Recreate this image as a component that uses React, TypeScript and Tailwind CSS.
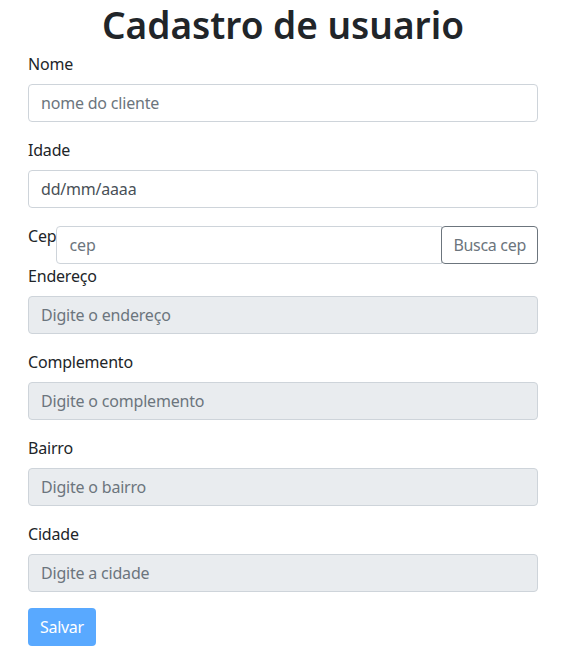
import { ReactNode } from "react";

const font = { fontFamily: '"Segoe UI", "Noto Sans", "Open Sans", sans-serif' };

function Field({ label, placeholder, disabled = false, value }: { label: string; placeholder?: string; disabled?: boolean; value?: string }) {
  return (
    <div className="mb-4">
      <label className="mb-2 block text-base leading-6 tracking-[-0.2px] text-[#212529]">{label}</label>
      <input
        readOnly
        disabled={disabled}
        placeholder={placeholder}
        defaultValue={value}
        className={
          "block h-[38px] w-full rounded border border-[#ced4da] px-3 text-base tracking-[-0.2px] text-[#495057] outline-none placeholder:text-[#6c757d] " +
          (disabled ? "bg-[#e9ecef]" : "bg-white")
        }
        style={font}
      />
    </div>
  );
}

function Row({ children }: { children: ReactNode }) {
  return <div className="flex items-start">{children}</div>;
}

export default function App() {
  return (
    <div className="min-h-screen bg-white" style={font}>
      <div className="ml-[28px] w-[510px]">
        <h1 className="pt-[2px] text-center text-[37px] font-semibold leading-[46px] text-[#212529]">Cadastro de usuario</h1>
        <form className="mt-1">
          <Field label="Nome" placeholder="nome do cliente" />
          <Field label="Idade" value="dd/mm/aaaa" />
          <Row>
            <label className="text-base leading-6 tracking-[-0.2px] text-[#212529]">Cep</label>
            <div className="mt-[2px] flex flex-1">
              <input
                readOnly
                placeholder="cep"
                className="h-[38px] min-w-0 flex-1 rounded-l border border-[#ced4da] bg-white px-3 text-base outline-none placeholder:text-[#6c757d]"
                style={font}
              />
              <button
                type="button"
                className="-ml-px h-[38px] rounded border border-[#6c757d] bg-white px-[11px] text-base tracking-[-0.3px] text-[#6c757d]"
                style={font}
              >
                Busca cep
              </button>
            </div>
          </Row>
          <Field label="Endereço" placeholder="Digite o endereço" disabled />
          <Field label="Complemento" placeholder="Digite o complemento" disabled />
          <Field label="Bairro" placeholder="Digite o bairro" disabled />
          <Field label="Cidade" placeholder="Digite a cidade" disabled />
          <button type="button" className="h-[38px] rounded bg-[#59a9ff] px-3 text-base tracking-[-0.3px] text-white" style={font}>
            Salvar
          </button>
        </form>
      </div>
    </div>
  );
}
